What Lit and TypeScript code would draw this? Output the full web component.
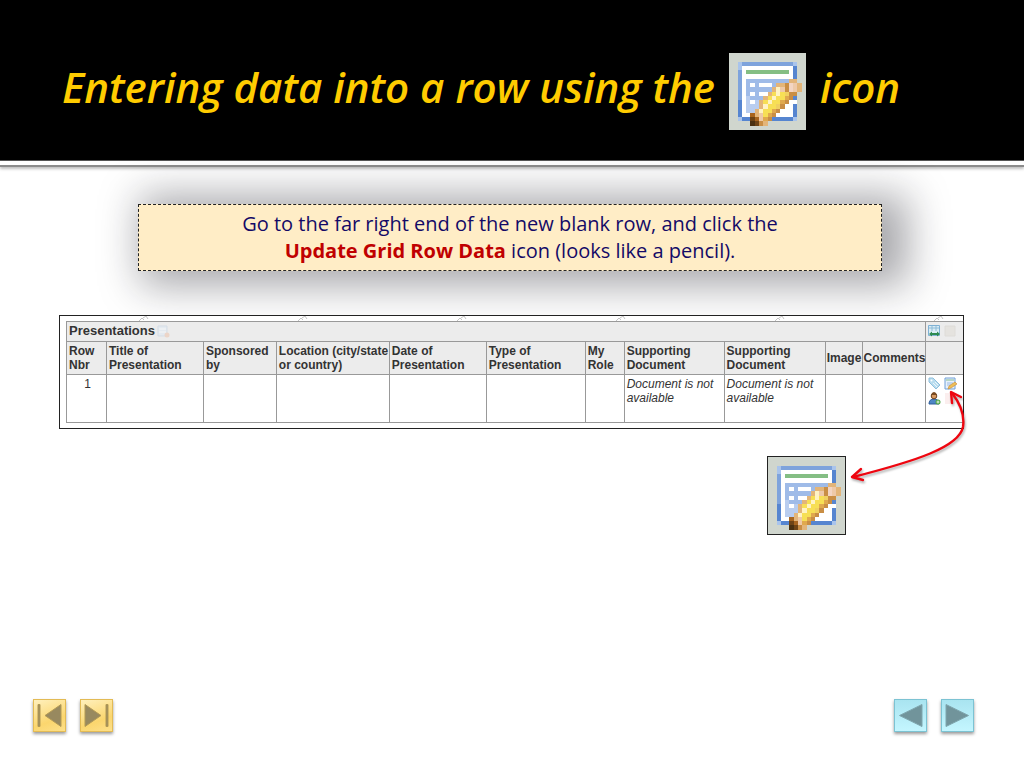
import { LitElement, html, css, svg } from "lit";
import { customElement, property } from "lit/decorators.js";

const PALETTE: Record<string, string> = {
  b: "#7ea3dc", B: "#5685d0", c: "#a9c4ec", p: "#b9cdef", P: "#9fbbe8",
  w: "#ffffff", g: "#84be84", t: "#e3b579", k: "#eec9a8", K: "#f3d5c3",
  h: "#fff3c4", y: "#f7df55", Y: "#f0d060", o: "#e0a94e", n: "#c98e45",
  d: "#a8651f", D: "#6e4416", x: "#4a3010",
};

const PIXELS = [
  "..................",
  "..................",
  "..cbbbbbbbbbbbbc..",
  "..cwwwwwwwwwwwwB..",
  "..bwggggggggggwB..",
  "..bwwwwwwwwwwwwB..",
  "..bwPPPPPPPPPPtt..",
  "..bwPwPwwwPttnKkt.",
  "..bwPPPPPPthknKkt.",
  "..bwPwPwwtyhyYnn..",
  "..bwpPPPtyhyyonB..",
  "..Bwpwptyhyyonww..",
  "..BwpppthyyYnwwB..",
  "..BwppthyyonwwwB..",
  "..BwwdtkyonwwwwB..",
  "..cBBDdkonBBBBBc..",
  ".....xDnt.........",
  "..................",
];

@customElement("pencil-icon")
export class PencilIcon extends LitElement {
  static styles = css`
    :host { display: block; }
    svg { display: block; width: 100%; height: 100%; }
  `;
  render() {
    return html`<svg viewBox="0 0 18 18" shape-rendering="crispEdges" aria-hidden="true">
      <rect width="18" height="18" fill="#d0d6ce"></rect>
      ${PIXELS.flatMap((row, y) =>
        [...row].map((c, x) =>
          c === "." ? null : svg`<rect x=${x} y=${y} width="1" height="1" fill=${PALETTE[c]}></rect>`))}
    </svg>`;
  }
}

@customElement("nav-button")
export class NavButton extends LitElement {
  @property() kind = "prev";
  @property() label = "";
  static styles = css`
    :host { display: block; }
    button {
      display: block; width: 33px; height: 33px; padding: 0;
      border: 1px solid #e3bb55;
      background: linear-gradient(160deg, #fff0bd, #fbd66e 65%, #fde08a);
      box-shadow: 0 2px 3px rgba(0, 0, 0, 0.4);
    }
    button.blue {
      border-color: #7cc3d3;
      background: linear-gradient(180deg, #a9e4f0, #c4f6ff);
    }
    svg { display: block; width: 31px; height: 31px; }
    .gold path { fill: #98895f; stroke: #b39a55; }
    .blue path { fill: #71949b; stroke: #7fa6ae; }
  `;
  render() {
    const shapes: Record<string, string> = {
      first: "M4 4.500h2v22h-2zM27 4.500v22L11 15.500z",
      last: "M27 4.500h-2v22h2zM4 4.500v22L20 15.500z",
      prev: "M27 4.500v22L4.500 15.500z",
      next: "M4 4.500v22L26.500 15.500z",
    };
    const tone = this.kind === "prev" || this.kind === "next" ? "blue" : "gold";
    return html`<button class=${tone} aria-label=${this.label}>
      <svg viewBox="0 0 31 31"><path d=${shapes[this.kind]} stroke-width="1"></path></svg>
    </button>`;
  }
}

@customElement("app-root")
export class AppRoot extends LitElement {
  static styles = css`
    :host {
      display: flex; flex-direction: column; min-height: 100vh;
      background: #fff; color: #333;
      font-family: "Open Sans", "Noto Sans", sans-serif;
    }
    header { background: #000; height: 161px; display: flex; align-items: center; padding: 0 62px; box-sizing: border-box; border-bottom: 1px solid #555; }
    h1 {
      margin: 22px 0 0; display: flex; align-items: center; gap: 14px;
      color: #ffcc00; font-size: 42px; line-height: 76px; font-weight: 600; font-style: italic;
      white-space: nowrap;
    }
    h1 span { padding-bottom: 8px; }
    h1 pencil-icon { width: 77px; height: 77px; }
    .rule { height: 4px; border-bottom: 2px solid #8c8c8c; box-shadow: 0 2px 3px rgba(0, 0, 0, 0.25); }
    .callout {
      margin: 37px 142px 0 138px; padding: 5px 0 6px; box-sizing: border-box;
      border: 1px dashed #222; background: #ffedc6; color: #140a66;
      text-align: center; font-size: 20px; line-height: 27px;
      box-shadow: 14px 3px 40px 12px rgba(20, 20, 30, 0.37);
    }
    .callout p { margin: 0; }
    .callout strong { color: #c00000; }
    .figure { position: relative; margin: 44px 60px 0 59px; }
    .frame {
      border: 1px solid #222; padding: 0 0 5px 6px; background: #fff;
      font-family: "Liberation Sans", Arial, sans-serif; font-size: 12px; line-height: 14px;
    }
    .marks { display: block; width: 100%; height: 5px; }
    table { width: 100%; border-collapse: collapse; table-layout: fixed; }
    th, td { border: 1px solid #999; padding: 2px 0 2px 2px; text-align: left; vertical-align: top; }
    th { background: #ececec; font-weight: bold; vertical-align: middle; }
    th.tight { padding: 0; text-align: center; white-space: nowrap; }
    tr > :last-child { border-right: 0; }
    .title th { font-size: 13px; height: 16px; padding: 1px 0 2px 2px; }
    .names th { height: 28px; }
    .data td { height: 43px; font-style: italic; }
    .data td.num { text-align: center; font-style: normal; }
    .line { display: flex; align-items: center; gap: 2px; }
    .tools { display: grid; grid-template-columns: 13px 13px; gap: 2px 3px; }
    .tools svg, .line svg { display: block; width: 13px; height: 13px; }
    .big { width: 77px; height: 77px; border: 1px solid #222; margin: 27px 118px 0 auto; }
    .arrow { position: absolute; right: -14px; top: 70px; width: 130px; height: 110px; filter: drop-shadow(1px 2px 1px rgba(0, 0, 0, 0.3)); }
    footer { margin-top: auto; padding: 0 50px 36px 33px; display: flex; justify-content: space-between; }
    footer div { display: flex; gap: 14px; }
  `;

  render() {
    const widths = [40, 97, 73, 113, 97, 99, 39, 100, 101, 38, 63, 37];
    return html`
      <header>
        <h1><span>Entering data into a row using the</span><pencil-icon></pencil-icon><span>icon</span></h1>
      </header>
      <div class="rule"></div>
      <div class="callout">
        <p>Go to the far right end of the new blank row, and click the</p>
        <p><strong>Update Grid Row Data</strong> icon (looks like a pencil).</p>
      </div>
      <div class="figure">
        <div class="frame">
          <svg class="marks" aria-hidden="true">
            <defs><pattern id="m" x="72" width="159" height="5" patternUnits="userSpaceOnUse">
              <path d="M1 5l3-3 2 2M5 2l3-2 2 3" fill="none" stroke="#c4c4c4"></path>
            </pattern></defs>
            <rect width="100%" height="5" fill="url(#m)"></rect>
          </svg>
          <table>
            <colgroup>${widths.map((w) => html`<col style="width:${(w / 897) * 100}%" />`)}</colgroup>
            <thead>
              <tr class="title">
                <th colspan="11"><div class="line">Presentations
                  <svg viewBox="0 0 13 13"><path d="M1 1h9v10H1z" fill="#e4eaf0" stroke="#d5dde6"></path><path d="M2 4h7M2 7h7" stroke="#f6f6f6"></path><circle cx="10" cy="10" r="2.500" fill="#ecd5c8"></circle></svg>
                </div></th>
                <th><div class="tools">
                  <svg viewBox="0 0 13 13"><path d="M.5.5h11v10H.5z" fill="#d9ecf5" stroke="#7fb1d4"></path><path d="M1 3h10M4 1v5M8 1v5" stroke="#8dbbd8"></path><path d="M1 9l3-2.500v1.500h5V6.500L12 9l-3 2.500V10H4v1.500z" fill="#2d8a50"></path></svg>
                  <svg viewBox="0 0 13 13"><path d="M1 1h10v10H1z" fill="#e5e3df" stroke="#dedcd8"></path></svg>
                </div></th>
              </tr>
              <tr class="names">
                <th>Row Nbr</th><th>Title of<br />Presentation</th><th>Sponsored by</th>
                <th>Location (city/state or country)</th><th>Date of<br />Presentation</th>
                <th>Type of<br />Presentation</th><th>My Role</th><th>Supporting Document</th>
                <th>Supporting Document</th><th class="tight">Image</th><th class="tight">Comments</th><th></th>
              </tr>
            </thead>
            <tbody>
              <tr class="data">
                <td class="num">1</td><td></td><td></td><td></td><td></td><td></td><td></td>
                <td>Document is not available</td><td>Document is not available</td><td></td><td></td>
                <td><div class="tools">
                  <svg viewBox="0 0 13 13"><path d="M1 1h4l7 7-4 4-7-7z" fill="#b9dcee" stroke="#8fbfdd"></path><circle cx="3.500" cy="3.500" r="1" fill="#fff"></circle><path d="M5 6l4 4M7 5l3 3" stroke="#eaf6fc"></path></svg>
                  <svg viewBox="0 0 13 13"><path d="M1 1h10v11H1z" fill="#e8f1fb" stroke="#6f9fd8"></path><path d="M2 3h8" stroke="#82bb90"></path><path d="M3 6h6M3 8h4" stroke="#9bbbe5"></path><path d="M4 12l1-3 6-4 2 2-6 4z" fill="#eebf57" stroke="#ca8a35" stroke-width=".6"></path></svg>
                  <svg viewBox="0 0 13 13"><path d="M1 12q0-5 5-5t5 5z" fill="#4e86c6" stroke="#2f5c99"></path><circle cx="6" cy="4" r="2.800" fill="#d99a61" stroke="#6d4321"></circle><path d="M3 3q1-3 3-3t3 3z" fill="#7a4a20"></path><circle cx="10" cy="10" r="2.500" fill="#4fa545"></circle><path d="M10 8.500v3M8.500 10h3" stroke="#fff" stroke-width=".8"></path></svg>
                  <svg viewBox="0 0 13 13"><path d="M1 1h10v11H1z" fill="#fbeeee"></path></svg>
                </div></td>
              </tr>
            </tbody>
          </table>
        </div>
        <pencil-icon class="big"></pencil-icon>
        <svg class="arrow" viewBox="0 0 130 110" aria-hidden="true">
          <g fill="none" stroke="#ee0610" stroke-width="2.400" stroke-linecap="round" stroke-linejoin="round">
            <path d="M104 8C111 17 117 29 115 42C111 62 68 76 5 92"></path>
            <path d="M104 18L103 7L113 12"></path>
            <path d="M13 84L4 92L15 95"></path>
          </g>
        </svg>
      </div>
      <footer>
        <div><nav-button kind="first" label="First slide"></nav-button><nav-button kind="last" label="Last slide"></nav-button></div>
        <div><nav-button kind="prev" label="Previous slide"></nav-button><nav-button kind="next" label="Next slide"></nav-button></div>
      </footer>
    `;
  }
}
